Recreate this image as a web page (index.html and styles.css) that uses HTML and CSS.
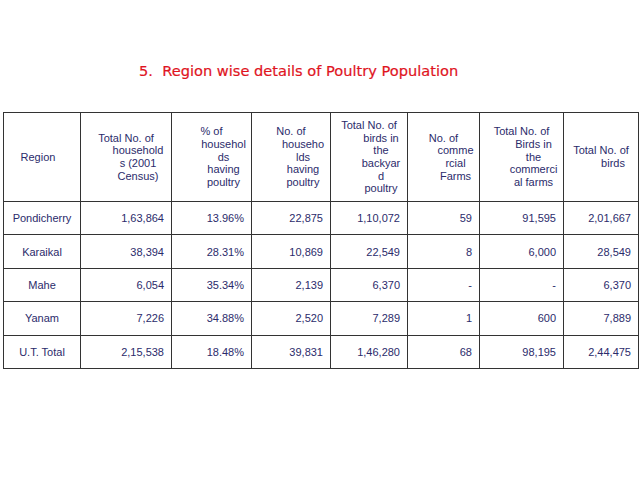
FILE: index.html
```html
<!DOCTYPE html>
<html>
<head>
<meta charset="utf-8">
<title>Region wise details of Poultry Population</title>
<link rel="stylesheet" href="styles.css">
</head>
<body>
<div class="slide">
  <h1 class="title">5.  Region wise details of Poultry Population</h1>
  <table class="data">
    <colgroup>
      <col class="c1"><col class="c2"><col class="c3"><col class="c4">
      <col class="c5"><col class="c6"><col class="c7"><col class="c8">
    </colgroup>
    <thead>
      <tr class="head">
        <th class="region-head">Region</th>
        <th>Total No. of<br>household<br>s (2001<br>Census)</th>
        <th>% of<br>househol<br>ds<br>having<br>poultry</th>
        <th>No. of<br>househo<br>lds<br>having<br>poultry</th>
        <th>Total No. of<br>birds in<br>the<br>backyar<br>d<br>poultry</th>
        <th>No. of<br>comme<br>rcial<br>Farms</th>
        <th>Total No. of<br>Birds in<br>the<br>commerci<br>al farms</th>
        <th>Total No. of<br>birds</th>
      </tr>
    </thead>
    <tbody>
      <tr><td class="region">Pondicherry</td><td>1,63,864</td><td>13.96%</td><td>22,875</td><td>1,10,072</td><td>59</td><td>91,595</td><td>2,01,667</td></tr>
      <tr><td class="region">Karaikal</td><td>38,394</td><td>28.31%</td><td>10,869</td><td>22,549</td><td>8</td><td>6,000</td><td>28,549</td></tr>
      <tr><td class="region">Mahe</td><td>6,054</td><td>35.34%</td><td>2,139</td><td>6,370</td><td>-</td><td>-</td><td>6,370</td></tr>
      <tr><td class="region">Yanam</td><td>7,226</td><td>34.88%</td><td>2,520</td><td>7,289</td><td>1</td><td>600</td><td>7,889</td></tr>
      <tr><td class="region">U.T. Total</td><td>2,15,538</td><td>18.48%</td><td>39,831</td><td>1,46,280</td><td>68</td><td>98,195</td><td>2,44,475</td></tr>
    </tbody>
  </table>
</div>
</body>
</html>
```

FILE: styles.css
```css
html, body {
  margin: 0;
  padding: 0;
  background: #ffffff;
}

.slide {
  width: 640px;
  height: 480px;
  padding-top: 63px;
  box-sizing: border-box;
}

.title {
  margin: 0 0 0 139px;
  font-family: "DejaVu Sans", Verdana, sans-serif;
  font-weight: normal;
  font-size: 14.6px;
  line-height: 16px;
  letter-spacing: 0;
  color: #e0141e;
  white-space: pre;
  -webkit-text-stroke: 0.2px #e0141e;
}

.data {
  margin: 33px 0 0 3px;
  width: 635px;
  table-layout: fixed;
  border-collapse: collapse;
  font-family: "Liberation Sans", Arial, sans-serif;
  font-size: 11px;
  color: #2b2b6b;
}

.c1 { width: 77px; }
.c2 { width: 91px; }
.c3 { width: 80px; }
.c4 { width: 79px; }
.c5 { width: 77px; }
.c6 { width: 72px; }
.c7 { width: 84px; }
.c8 { width: 75px; }

.data th,
.data td {
  border: 1px solid #333333;
  padding: 0;
}

.data th {
  font-weight: normal;
  line-height: 12.7px;
  text-align: center;
  vertical-align: middle;
  padding-left: 24px;
  text-indent: -24px;
}

.data th.region-head {
  padding-left: 0;
  padding-right: 8px;
  text-indent: 0;
}

.head {
  height: 89px;
}

.data tbody tr {
  height: 33.4px;
}

.data td {
  text-align: right;
  padding-right: 7px;
  vertical-align: middle;
}

.data td.region {
  text-align: center;
  padding-right: 0;
}
```
